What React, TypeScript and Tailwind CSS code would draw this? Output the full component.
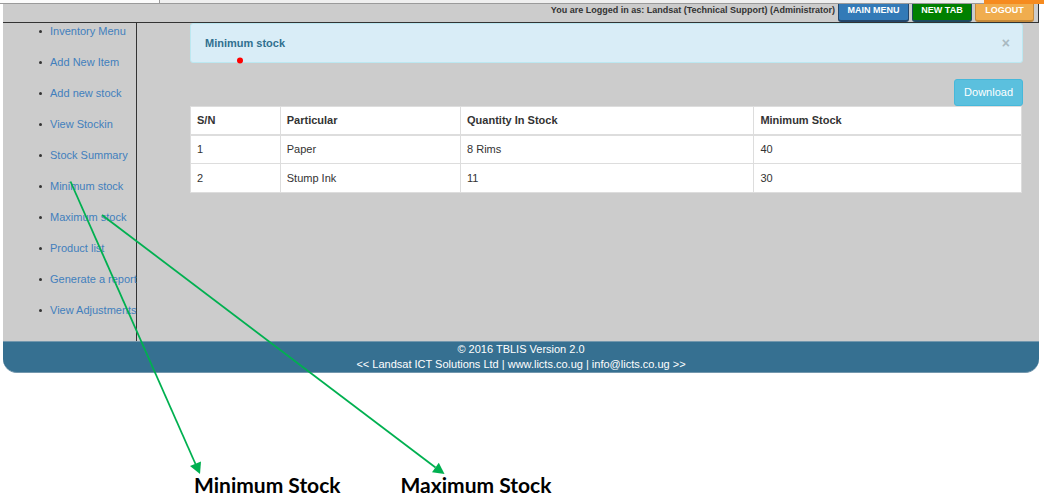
const navItems = [
  "Inventory Menu",
  "Add New Item",
  "Add new stock",
  "View Stockin",
  "Stock Summary",
  "Minimum stock",
  "Maximum stock",
  "Product list",
  "Generate a report",
  "View Adjustments",
];

const stock = [
  { sn: 1, particular: "Paper", quantity: "8 Rims", minimum: 40 },
  { sn: 2, particular: "Stump Ink", quantity: "11", minimum: 30 },
];

function BrowserStrip() {
  return (
    <div className="flex h-1 border-b border-[#9a9a9a]">
      <div className="w-40 border-r border-[#9a9a9a] bg-[#fbfbfb]" />
      <div className="grow bg-[#efefef]" />
      <div className="-mb-px w-[60px] bg-[#f68b1f]" />
    </div>
  );
}

function TopBar() {
  return (
    <header className="flex h-[19px] items-start justify-end gap-[3px] border-r border-b border-[#333] pr-1 text-[9px] leading-3 font-bold text-[#333]">
      <span>You are Logged in as: Landsat (Technical Support) (Administrator)</span>
      <button className="h-[18px] w-[71px] rounded-b-[3px] border border-t-0 border-b-2 border-[#23466b] bg-[#337ab7] text-white">
        <span className="block h-4 whitespace-nowrap">MAIN MENU</span>
      </button>
      <button className="h-[18px] w-[60px] rounded-b-[3px] border border-t-0 border-b-2 border-[#1d4a60] bg-[#008000] text-white">
        <span className="block h-4 whitespace-nowrap">NEW TAB</span>
      </button>
      <button className="h-[18px] w-[59px] rounded-b-[3px] border border-t-0 border-b-2 border-[#c58a3a] bg-[#f0ad4e] text-white">
        <span className="block h-4 whitespace-nowrap">LOGOUT</span>
      </button>
    </header>
  );
}

function Sidebar() {
  return (
    <nav className="w-[134px] shrink-0 border-r border-[#333] pb-2">
      <ul className="list-none">
        {navItems.map((item) => (
          <li key={item} className="flex h-[31px] items-start pl-9 leading-4">
            <span className="mt-[7px] mr-2 size-[3px] shrink-0 rounded-full bg-[#333]" />
            <a href="#" className="whitespace-nowrap text-[#427fbd]">
              {item}
            </a>
          </li>
        ))}
      </ul>
    </nav>
  );
}

function StockTable() {
  const cell = "border border-[#ddd] px-[6px] text-left";
  return (
    <div className="pr-px">
      <table className="w-full table-fixed border-collapse bg-white">
        <colgroup>
          <col className="w-[10.8%]" />
          <col className="w-[21.7%]" />
          <col className="w-[35.3%]" />
          <col />
        </colgroup>
        <thead>
          <tr className="h-7">
            <th className={cell + " border-b-2"}>S/N</th>
            <th className={cell + " border-b-2"}>Particular</th>
            <th className={cell + " border-b-2"}>Quantity In Stock</th>
            <th className={cell + " border-b-2"}>Minimum Stock</th>
          </tr>
        </thead>
        <tbody>
          {stock.map((row) => (
            <tr key={row.sn} className="h-[29px]">
              <td className={cell}>{row.sn}</td>
              <td className={cell}>{row.particular}</td>
              <td className={cell}>{row.quantity}</td>
              <td className={cell}>{row.minimum}</td>
            </tr>
          ))}
        </tbody>
      </table>
    </div>
  );
}

function Arrows() {
  return (
    <svg
      className="pointer-events-none absolute top-0 left-0"
      width="460"
      height="480"
      viewBox="0 0 460 480"
      fill="none"
      aria-hidden="true"
    >
      <circle cx="240" cy="60.5" r="3" fill="#ff0000" />
      <g stroke="#00b050" strokeWidth="1.8">
        <path d="M70.5 181.5 L195.5 464" />
        <path d="M102 215 L435.5 467.5" />
      </g>
      <g fill="#00b050">
        <path d="M200 474 L190 466 L201 461.5 Z" />
        <path d="M444.500 474 L432 472.200 L438.800 462.800 Z" />
      </g>
    </svg>
  );
}

export default function App() {
  return (
    <div className="relative bg-white font-['Liberation_Sans',Arial,sans-serif] text-[11px] text-[#333]">
      <BrowserStrip />
      <div className="mr-[5px] ml-[3px]">
        <div className="bg-[#ccc]">
          <TopBar />
          <div className="flex">
            <Sidebar />
            <main className="min-w-0 grow pr-4 pl-[53px]">
              <div className="flex h-10 items-center justify-between rounded-[3px] border border-[#bce8f1] bg-[#d9edf7] pr-3 pl-[14px]">
                <strong className="text-[#31708f]">Minimum stock</strong>
                <button aria-label="Close" className="text-sm font-bold text-[#a9b9c1]">
                  ×
                </button>
              </div>
              <div className="mt-4 flex justify-end">
                <button className="h-[27px] rounded-[3px] border border-[#46b8da] bg-[#5bc0de] px-[9px] text-white">
                  Download
                </button>
              </div>
              <StockTable />
            </main>
          </div>
        </div>
        <footer className="rounded-b-[14px] border-y border-[#7397ad] bg-[#367091] text-center leading-[15px] text-white">
          <p>© 2016 TBLIS Version 2.0</p>
          <p>&lt;&lt; Landsat ICT Solutions Ltd | www.licts.co.ug | info@licts.co.ug &gt;&gt;</p>
        </footer>
      </div>
      <div className="mt-[102px] flex gap-[60px] pl-[194px] font-[Lato,sans-serif] text-[21px] leading-5 font-bold text-black">
        <p>Minimum Stock</p>
        <p>Maximum Stock</p>
      </div>
      <Arrows />
    </div>
  );
}
